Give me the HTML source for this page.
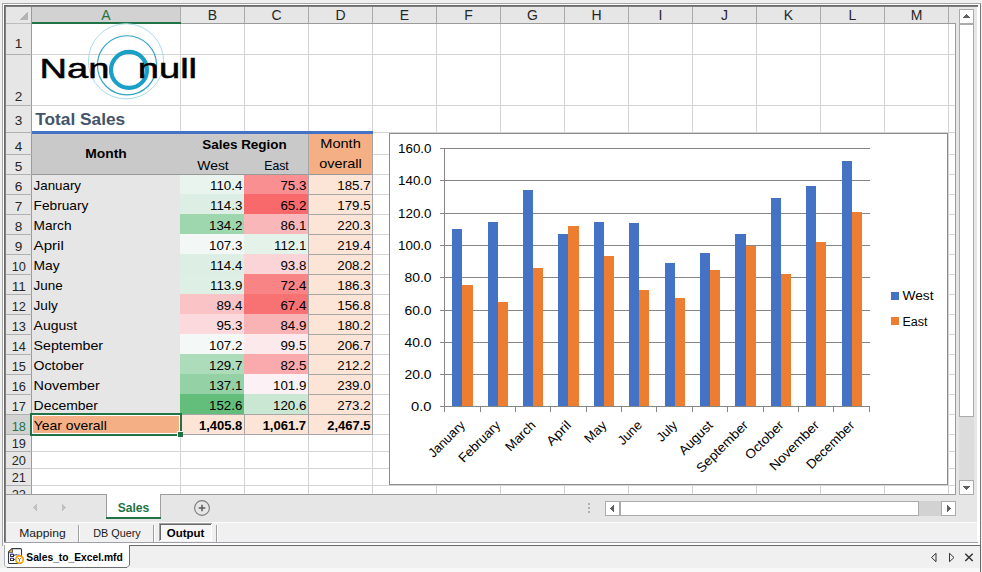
<!DOCTYPE html>
<html><head><meta charset="utf-8"><title>Sales_to_Excel.mfd - Output</title>
<style>
html,body{margin:0;padding:0;background:#f0f0f0;overflow:hidden}
svg{display:block;font-family:"Liberation Sans",sans-serif}
rect,polygon{shape-rendering:crispEdges}
text{white-space:pre}
</style></head><body>
<svg width="982" height="572" viewBox="0 0 982 572">
<rect x="0" y="0" width="982" height="572" fill="#f0f0f0" />
<rect x="6" y="7" width="972" height="535" fill="#e6e6e6" />
<rect x="6" y="522" width="972" height="20" fill="#f0f0f0" />
<rect x="6" y="522" width="971" height="1" fill="#fbfbfb" />
<rect x="2" y="3" width="979" height="1" fill="#a8a8a8" />
<rect x="3" y="4" width="977" height="1" fill="#ffffff" />
<rect x="4" y="5" width="974" height="1" fill="#696969" />
<rect x="4" y="6" width="974" height="1" fill="#808080" />
<rect x="2" y="3" width="1" height="543" fill="#a8a8a8" />
<rect x="3" y="4" width="1" height="539" fill="#ffffff" />
<rect x="4" y="5" width="1" height="538" fill="#696969" />
<rect x="5" y="6" width="1" height="537" fill="#808080" />
<rect x="977" y="7" width="3" height="538" fill="#ffffff" />
<rect x="978" y="5" width="2" height="2" fill="#ffffff" />
<rect x="980" y="4" width="1" height="541" fill="#787878" />
<rect x="4" y="542" width="974" height="1" fill="#a0a0a8" />
<rect x="4" y="543" width="976" height="2" fill="#ffffff" />
<rect x="129" y="545" width="852" height="1" fill="#696969" />
<rect x="0" y="546" width="980" height="22" fill="#f0f0f0" />
<rect x="0" y="568" width="980" height="4" fill="#f8f8f8" />
<rect x="980" y="545" width="1" height="27" fill="#696969" />
<rect x="32" y="24" width="923" height="470" fill="#ffffff" />
<rect x="6" y="7" width="950" height="16" fill="#e6e6e6" />
<rect x="6" y="24" width="25" height="470" fill="#e6e6e6" />
<rect x="32" y="7" width="148" height="15" fill="#d2d2d2" />
<rect x="6" y="415" width="25" height="19" fill="#d2d2d2" />
<rect x="180" y="24" width="1" height="470" fill="#d4d4d4" />
<rect x="244" y="24" width="1" height="470" fill="#d4d4d4" />
<rect x="308" y="24" width="1" height="470" fill="#d4d4d4" />
<rect x="372" y="24" width="1" height="470" fill="#d4d4d4" />
<rect x="436" y="24" width="1" height="470" fill="#d4d4d4" />
<rect x="500" y="24" width="1" height="470" fill="#d4d4d4" />
<rect x="564" y="24" width="1" height="470" fill="#d4d4d4" />
<rect x="628" y="24" width="1" height="470" fill="#d4d4d4" />
<rect x="692" y="24" width="1" height="470" fill="#d4d4d4" />
<rect x="756" y="24" width="1" height="470" fill="#d4d4d4" />
<rect x="820" y="24" width="1" height="470" fill="#d4d4d4" />
<rect x="884" y="24" width="1" height="470" fill="#d4d4d4" />
<rect x="948" y="24" width="1" height="470" fill="#d4d4d4" />
<rect x="32" y="54" width="923" height="1" fill="#d4d4d4" />
<rect x="32" y="105" width="923" height="1" fill="#d4d4d4" />
<rect x="32" y="132" width="923" height="1" fill="#d4d4d4" />
<rect x="32" y="154" width="923" height="1" fill="#d4d4d4" />
<rect x="32" y="174" width="923" height="1" fill="#d4d4d4" />
<rect x="32" y="194" width="923" height="1" fill="#d4d4d4" />
<rect x="32" y="214" width="923" height="1" fill="#d4d4d4" />
<rect x="32" y="234" width="923" height="1" fill="#d4d4d4" />
<rect x="32" y="254" width="923" height="1" fill="#d4d4d4" />
<rect x="32" y="274" width="923" height="1" fill="#d4d4d4" />
<rect x="32" y="294" width="923" height="1" fill="#d4d4d4" />
<rect x="32" y="314" width="923" height="1" fill="#d4d4d4" />
<rect x="32" y="334" width="923" height="1" fill="#d4d4d4" />
<rect x="32" y="354" width="923" height="1" fill="#d4d4d4" />
<rect x="32" y="374" width="923" height="1" fill="#d4d4d4" />
<rect x="32" y="394" width="923" height="1" fill="#d4d4d4" />
<rect x="32" y="414" width="923" height="1" fill="#d4d4d4" />
<rect x="32" y="434" width="923" height="1" fill="#d4d4d4" />
<rect x="32" y="451" width="923" height="1" fill="#d4d4d4" />
<rect x="32" y="468" width="923" height="1" fill="#d4d4d4" />
<rect x="32" y="485" width="923" height="1" fill="#d4d4d4" />
<rect x="31" y="7" width="1" height="487" fill="#9b9b9b" />
<rect x="180" y="7" width="1" height="17" fill="#ababab" />
<rect x="244" y="7" width="1" height="17" fill="#ababab" />
<rect x="308" y="7" width="1" height="17" fill="#ababab" />
<rect x="372" y="7" width="1" height="17" fill="#ababab" />
<rect x="436" y="7" width="1" height="17" fill="#ababab" />
<rect x="500" y="7" width="1" height="17" fill="#ababab" />
<rect x="564" y="7" width="1" height="17" fill="#ababab" />
<rect x="628" y="7" width="1" height="17" fill="#ababab" />
<rect x="692" y="7" width="1" height="17" fill="#ababab" />
<rect x="756" y="7" width="1" height="17" fill="#ababab" />
<rect x="820" y="7" width="1" height="17" fill="#ababab" />
<rect x="884" y="7" width="1" height="17" fill="#ababab" />
<rect x="948" y="7" width="1" height="17" fill="#ababab" />
<rect x="6" y="23" width="26" height="1" fill="#9b9b9b" />
<rect x="6" y="54" width="26" height="1" fill="#b0b0b0" />
<rect x="6" y="105" width="26" height="1" fill="#b0b0b0" />
<rect x="6" y="132" width="26" height="1" fill="#b0b0b0" />
<rect x="6" y="154" width="26" height="1" fill="#b0b0b0" />
<rect x="6" y="174" width="26" height="1" fill="#b0b0b0" />
<rect x="6" y="194" width="26" height="1" fill="#b0b0b0" />
<rect x="6" y="214" width="26" height="1" fill="#b0b0b0" />
<rect x="6" y="234" width="26" height="1" fill="#b0b0b0" />
<rect x="6" y="254" width="26" height="1" fill="#b0b0b0" />
<rect x="6" y="274" width="26" height="1" fill="#b0b0b0" />
<rect x="6" y="294" width="26" height="1" fill="#b0b0b0" />
<rect x="6" y="314" width="26" height="1" fill="#b0b0b0" />
<rect x="6" y="334" width="26" height="1" fill="#b0b0b0" />
<rect x="6" y="354" width="26" height="1" fill="#b0b0b0" />
<rect x="6" y="374" width="26" height="1" fill="#b0b0b0" />
<rect x="6" y="394" width="26" height="1" fill="#b0b0b0" />
<rect x="6" y="414" width="26" height="1" fill="#b0b0b0" />
<rect x="6" y="434" width="26" height="1" fill="#b0b0b0" />
<rect x="6" y="451" width="26" height="1" fill="#b0b0b0" />
<rect x="6" y="468" width="26" height="1" fill="#b0b0b0" />
<rect x="6" y="485" width="26" height="1" fill="#b0b0b0" />
<rect x="6" y="23" width="950" height="1" fill="#9b9b9b" />
<rect x="6" y="23" width="25" height="1" fill="#bcbcbc" />
<rect x="955" y="23" width="1" height="472" fill="#9b9b9b" />
<rect x="6" y="494" width="950" height="1" fill="#9b9b9b" />
<rect x="32" y="22" width="149" height="2" fill="#217346" />
<polygon points="28,11 28,20 19,20" fill="#b4b4b4"/>
<text x="106.0" y="20" font-size="14" text-anchor="middle" fill="#217346" >A</text>
<text x="212.5" y="20" font-size="14" text-anchor="middle" fill="#262626" >B</text>
<text x="276.5" y="20" font-size="14" text-anchor="middle" fill="#262626" >C</text>
<text x="340.5" y="20" font-size="14" text-anchor="middle" fill="#262626" >D</text>
<text x="404.5" y="20" font-size="14" text-anchor="middle" fill="#262626" >E</text>
<text x="468.5" y="20" font-size="14" text-anchor="middle" fill="#262626" >F</text>
<text x="532.5" y="20" font-size="14" text-anchor="middle" fill="#262626" >G</text>
<text x="596.5" y="20" font-size="14" text-anchor="middle" fill="#262626" >H</text>
<text x="660.5" y="20" font-size="14" text-anchor="middle" fill="#262626" >I</text>
<text x="724.5" y="20" font-size="14" text-anchor="middle" fill="#262626" >J</text>
<text x="788.5" y="20" font-size="14" text-anchor="middle" fill="#262626" >K</text>
<text x="852.5" y="20" font-size="14" text-anchor="middle" fill="#262626" >L</text>
<text x="916.5" y="20" font-size="14" text-anchor="middle" fill="#262626" >M</text>
<clipPath id="rh"><rect x="6" y="24" width="25" height="470"/></clipPath><g clip-path="url(#rh)">
<text x="18.5" y="48" font-size="13.6" text-anchor="middle" fill="#262626" >1</text>
<text x="18.5" y="101" font-size="13.6" text-anchor="middle" fill="#262626" >2</text>
<text x="18.5" y="125.3" font-size="13.6" text-anchor="middle" fill="#262626" >3</text>
<text x="18.5" y="150.5" font-size="13.6" text-anchor="middle" fill="#262626" >4</text>
<text x="18.5" y="170.5" font-size="13.6" text-anchor="middle" fill="#262626" >5</text>
<text x="18.5" y="190.5" font-size="13.6" text-anchor="middle" fill="#262626" >6</text>
<text x="18.5" y="210.5" font-size="13.6" text-anchor="middle" fill="#262626" >7</text>
<text x="18.5" y="230.5" font-size="13.6" text-anchor="middle" fill="#262626" >8</text>
<text x="18.5" y="250.5" font-size="13.6" text-anchor="middle" fill="#262626" >9</text>
<text x="18.8" y="270.5" font-size="13.6" text-anchor="middle" fill="#262626" textLength="14.2" lengthAdjust="spacingAndGlyphs">10</text>
<text x="18.8" y="290.5" font-size="13.6" text-anchor="middle" fill="#262626" textLength="14.2" lengthAdjust="spacingAndGlyphs">11</text>
<text x="18.8" y="310.5" font-size="13.6" text-anchor="middle" fill="#262626" textLength="14.2" lengthAdjust="spacingAndGlyphs">12</text>
<text x="18.8" y="330.5" font-size="13.6" text-anchor="middle" fill="#262626" textLength="14.2" lengthAdjust="spacingAndGlyphs">13</text>
<text x="18.8" y="350.5" font-size="13.6" text-anchor="middle" fill="#262626" textLength="14.2" lengthAdjust="spacingAndGlyphs">14</text>
<text x="18.8" y="370.5" font-size="13.6" text-anchor="middle" fill="#262626" textLength="14.2" lengthAdjust="spacingAndGlyphs">15</text>
<text x="18.8" y="390.5" font-size="13.6" text-anchor="middle" fill="#262626" textLength="14.2" lengthAdjust="spacingAndGlyphs">16</text>
<text x="18.8" y="410.5" font-size="13.6" text-anchor="middle" fill="#262626" textLength="14.2" lengthAdjust="spacingAndGlyphs">17</text>
<text x="18.8" y="430.5" font-size="13.6" text-anchor="middle" fill="#217346" textLength="14.2" lengthAdjust="spacingAndGlyphs">18</text>
<text x="18.8" y="447.5" font-size="13.6" text-anchor="middle" fill="#262626" textLength="14.2" lengthAdjust="spacingAndGlyphs">19</text>
<text x="18.8" y="464.5" font-size="13.6" text-anchor="middle" fill="#262626" textLength="14.2" lengthAdjust="spacingAndGlyphs">20</text>
<text x="18.8" y="481.5" font-size="13.6" text-anchor="middle" fill="#262626" textLength="14.2" lengthAdjust="spacingAndGlyphs">21</text>
<text x="18.8" y="498.5" font-size="13.6" text-anchor="middle" fill="#262626" textLength="14.2" lengthAdjust="spacingAndGlyphs">22</text>
</g>
<rect x="32" y="134" width="276" height="40" fill="#c9c9c9" />
<rect x="309" y="134" width="63" height="40" fill="#f4b084" />
<rect x="32" y="131" width="341" height="3" fill="#4472c4" />
<rect x="32" y="175" width="148" height="239" fill="#e7e6e6" />
<rect x="309" y="175" width="63" height="259" fill="#fce4d6" />
<rect x="180" y="174" width="64" height="20" fill="#e9f4ef" />
<rect x="244" y="174" width="64" height="20" fill="#f98f91" />
<rect x="180" y="194" width="64" height="20" fill="#ddefe4" />
<rect x="244" y="194" width="64" height="20" fill="#f8696b" />
<rect x="180" y="214" width="64" height="20" fill="#9ed6ae" />
<rect x="244" y="214" width="64" height="20" fill="#fab7ba" />
<rect x="180" y="234" width="64" height="20" fill="#f3f8f7" />
<rect x="244" y="234" width="64" height="20" fill="#e4f2ea" />
<rect x="180" y="254" width="64" height="20" fill="#ddefe4" />
<rect x="244" y="254" width="64" height="20" fill="#fbd4d7" />
<rect x="180" y="274" width="64" height="20" fill="#def0e5" />
<rect x="244" y="274" width="64" height="20" fill="#f98486" />
<rect x="180" y="294" width="64" height="20" fill="#fac3c6" />
<rect x="244" y="294" width="64" height="20" fill="#f87173" />
<rect x="180" y="314" width="64" height="20" fill="#fbd9dc" />
<rect x="244" y="314" width="64" height="20" fill="#fab3b5" />
<rect x="180" y="334" width="64" height="20" fill="#f4f9f8" />
<rect x="244" y="334" width="64" height="20" fill="#fbe9ec" />
<rect x="180" y="354" width="64" height="20" fill="#acdcba" />
<rect x="244" y="354" width="64" height="20" fill="#faaaac" />
<rect x="180" y="374" width="64" height="20" fill="#94d2a6" />
<rect x="244" y="374" width="64" height="20" fill="#fcf2f5" />
<rect x="180" y="394" width="64" height="20" fill="#63be7b" />
<rect x="244" y="394" width="64" height="20" fill="#c9e7d3" />
<rect x="32" y="415" width="148" height="19" fill="#f4b084" />
<rect x="180" y="415" width="128" height="19" fill="#fce4d6" />
<rect x="32" y="174" width="341" height="1" fill="#999999" />
<rect x="308" y="194" width="65" height="1" fill="#a6a6a6" />
<rect x="308" y="214" width="65" height="1" fill="#a6a6a6" />
<rect x="308" y="234" width="65" height="1" fill="#a6a6a6" />
<rect x="308" y="254" width="65" height="1" fill="#a6a6a6" />
<rect x="308" y="274" width="65" height="1" fill="#a6a6a6" />
<rect x="308" y="294" width="65" height="1" fill="#a6a6a6" />
<rect x="308" y="314" width="65" height="1" fill="#a6a6a6" />
<rect x="308" y="334" width="65" height="1" fill="#a6a6a6" />
<rect x="308" y="354" width="65" height="1" fill="#a6a6a6" />
<rect x="308" y="374" width="65" height="1" fill="#a6a6a6" />
<rect x="308" y="394" width="65" height="1" fill="#a6a6a6" />
<rect x="308" y="414" width="65" height="1" fill="#a6a6a6" />
<rect x="308" y="434" width="65" height="1" fill="#a6a6a6" />
<rect x="308" y="134" width="1" height="301" fill="#a6a6a6" />
<rect x="372" y="134" width="1" height="301" fill="#a6a6a6" />
<rect x="180" y="414" width="193" height="1" fill="#a6a6a6" />
<rect x="180" y="434" width="193" height="1" fill="#a6a6a6" />
<rect x="244" y="414" width="1" height="21" fill="#a6a6a6" />
<rect x="180" y="414" width="1" height="21" fill="#a6a6a6" />
<text x="33.6" y="189.6" font-size="13" fill="#000" textLength="47.4" lengthAdjust="spacingAndGlyphs">January</text>
<text x="242.3" y="189.6" font-size="13.3" text-anchor="end" fill="#000" >110.4</text>
<text x="306.3" y="189.6" font-size="13.3" text-anchor="end" fill="#000" >75.3</text>
<text x="370.6" y="189.6" font-size="13.3" text-anchor="end" fill="#000" >185.7</text>
<text x="33.6" y="209.6" font-size="13" fill="#000" textLength="54.7" lengthAdjust="spacingAndGlyphs">February</text>
<text x="242.3" y="209.6" font-size="13.3" text-anchor="end" fill="#000" >114.3</text>
<text x="306.3" y="209.6" font-size="13.3" text-anchor="end" fill="#000" >65.2</text>
<text x="370.6" y="209.6" font-size="13.3" text-anchor="end" fill="#000" >179.5</text>
<text x="33.6" y="229.6" font-size="13" fill="#000" textLength="37.9" lengthAdjust="spacingAndGlyphs">March</text>
<text x="242.3" y="229.6" font-size="13.3" text-anchor="end" fill="#000" >134.2</text>
<text x="306.3" y="229.6" font-size="13.3" text-anchor="end" fill="#000" >86.1</text>
<text x="370.6" y="229.6" font-size="13.3" text-anchor="end" fill="#000" >220.3</text>
<text x="33.6" y="249.6" font-size="13" fill="#000" textLength="30.2" lengthAdjust="spacingAndGlyphs">April</text>
<text x="242.3" y="249.6" font-size="13.3" text-anchor="end" fill="#000" >107.3</text>
<text x="306.3" y="249.6" font-size="13.3" text-anchor="end" fill="#000" >112.1</text>
<text x="370.6" y="249.6" font-size="13.3" text-anchor="end" fill="#000" >219.4</text>
<text x="33.6" y="269.6" font-size="13" fill="#000" textLength="26.1" lengthAdjust="spacingAndGlyphs">May</text>
<text x="242.3" y="269.6" font-size="13.3" text-anchor="end" fill="#000" >114.4</text>
<text x="306.3" y="269.6" font-size="13.3" text-anchor="end" fill="#000" >93.8</text>
<text x="370.6" y="269.6" font-size="13.3" text-anchor="end" fill="#000" >208.2</text>
<text x="33.6" y="289.6" font-size="13" fill="#000" textLength="29.1" lengthAdjust="spacingAndGlyphs">June</text>
<text x="242.3" y="289.6" font-size="13.3" text-anchor="end" fill="#000" >113.9</text>
<text x="306.3" y="289.6" font-size="13.3" text-anchor="end" fill="#000" >72.4</text>
<text x="370.6" y="289.6" font-size="13.3" text-anchor="end" fill="#000" >186.3</text>
<text x="33.6" y="309.6" font-size="13" fill="#000" textLength="24.1" lengthAdjust="spacingAndGlyphs">July</text>
<text x="242.3" y="309.6" font-size="13.3" text-anchor="end" fill="#000" >89.4</text>
<text x="306.3" y="309.6" font-size="13.3" text-anchor="end" fill="#000" >67.4</text>
<text x="370.6" y="309.6" font-size="13.3" text-anchor="end" fill="#000" >156.8</text>
<text x="33.6" y="329.6" font-size="13" fill="#000" textLength="43.5" lengthAdjust="spacingAndGlyphs">August</text>
<text x="242.3" y="329.6" font-size="13.3" text-anchor="end" fill="#000" >95.3</text>
<text x="306.3" y="329.6" font-size="13.3" text-anchor="end" fill="#000" >84.9</text>
<text x="370.6" y="329.6" font-size="13.3" text-anchor="end" fill="#000" >180.2</text>
<text x="33.6" y="349.6" font-size="13" fill="#000" textLength="69.5" lengthAdjust="spacingAndGlyphs">September</text>
<text x="242.3" y="349.6" font-size="13.3" text-anchor="end" fill="#000" >107.2</text>
<text x="306.3" y="349.6" font-size="13.3" text-anchor="end" fill="#000" >99.5</text>
<text x="370.6" y="349.6" font-size="13.3" text-anchor="end" fill="#000" >206.7</text>
<text x="33.6" y="369.6" font-size="13" fill="#000" textLength="50.1" lengthAdjust="spacingAndGlyphs">October</text>
<text x="242.3" y="369.6" font-size="13.3" text-anchor="end" fill="#000" >129.7</text>
<text x="306.3" y="369.6" font-size="13.3" text-anchor="end" fill="#000" >82.5</text>
<text x="370.6" y="369.6" font-size="13.3" text-anchor="end" fill="#000" >212.2</text>
<text x="33.6" y="389.6" font-size="13" fill="#000" textLength="66.3" lengthAdjust="spacingAndGlyphs">November</text>
<text x="242.3" y="389.6" font-size="13.3" text-anchor="end" fill="#000" >137.1</text>
<text x="306.3" y="389.6" font-size="13.3" text-anchor="end" fill="#000" >101.9</text>
<text x="370.6" y="389.6" font-size="13.3" text-anchor="end" fill="#000" >239.0</text>
<text x="33.6" y="409.6" font-size="13" fill="#000" textLength="64.3" lengthAdjust="spacingAndGlyphs">December</text>
<text x="242.3" y="409.6" font-size="13.3" text-anchor="end" fill="#000" >152.6</text>
<text x="306.3" y="409.6" font-size="13.3" text-anchor="end" fill="#000" >120.6</text>
<text x="370.6" y="409.6" font-size="13.3" text-anchor="end" fill="#000" >273.2</text>
<text x="242.3" y="429.6" font-size="13" text-anchor="end" font-weight="bold" fill="#000" >1,405.8</text>
<text x="306" y="429.6" font-size="13" text-anchor="end" font-weight="bold" fill="#000" >1,061.7</text>
<text x="370.6" y="429.6" font-size="13" text-anchor="end" font-weight="bold" fill="#000" >2,467.5</text>
<text x="106" y="157.7" font-size="13" text-anchor="middle" font-weight="bold" fill="#000" textLength="41.5" lengthAdjust="spacingAndGlyphs">Month</text>
<text x="244.5" y="148.5" font-size="13.4" text-anchor="middle" font-weight="bold" fill="#000" textLength="84.5" lengthAdjust="spacingAndGlyphs">Sales Region</text>
<text x="213" y="169.9" font-size="13" text-anchor="middle" fill="#000" textLength="31.5" lengthAdjust="spacingAndGlyphs">West</text>
<text x="276.5" y="169.9" font-size="13" text-anchor="middle" fill="#000" textLength="24.5" lengthAdjust="spacingAndGlyphs">East</text>
<text x="340.5" y="147.5" font-size="13" text-anchor="middle" fill="#000" textLength="40.5" lengthAdjust="spacingAndGlyphs">Month</text>
<text x="340.5" y="167.8" font-size="13" text-anchor="middle" fill="#000" textLength="42.5" lengthAdjust="spacingAndGlyphs">overall</text>
<text x="35.2" y="125.3" font-size="17.4" font-weight="bold" fill="#44546a" textLength="90" lengthAdjust="spacingAndGlyphs">Total Sales</text>
<rect x="30" y="413" width="152" height="23" fill="#217346" />
<rect x="32" y="415" width="148" height="19" fill="#ffffff" />
<rect x="33" y="416" width="146" height="17" fill="#f4b084" />
<rect x="177" y="431" width="6" height="6" fill="#ffffff" />
<rect x="178" y="432" width="5" height="5" fill="#217346" />
<text x="33.8" y="429.6" font-size="13" fill="#000" textLength="73" lengthAdjust="spacingAndGlyphs">Year overall</text>
<g shape-rendering="geometricPrecision">
<circle cx="126" cy="61.3" r="37.6" fill="none" stroke="#a8dcea" stroke-width="1"/>
<circle cx="127" cy="65.3" r="29.6" fill="none" stroke="#2fa3c6" stroke-width="1.15"/>
<circle cx="129" cy="69.9" r="18" fill="none" stroke="#1a9fc6" stroke-width="4.2"/>
<text transform="translate(39.6,78.3) scale(1.36,1)" font-size="28" fill="#000" stroke="#000" stroke-width="0.5">Nan</text>
<text transform="translate(137.8,78.3) scale(1.36,1)" font-size="28" fill="#000" stroke="#000" stroke-width="0.5">null</text>
</g>
<rect x="389" y="133" width="559" height="352" fill="#ffffff" />
<rect x="389.5" y="133.5" width="558" height="351" fill="none" stroke="#8c8c8c" stroke-width="1"/>
<rect x="440" y="406" width="430" height="1" fill="#868686" />
<text x="431.5" y="411.4" font-size="12" text-anchor="end" fill="#000" textLength="20.5" lengthAdjust="spacingAndGlyphs">0.0</text>
<rect x="440" y="374" width="430" height="1" fill="#868686" />
<text x="431.5" y="379.4" font-size="12" text-anchor="end" fill="#000" textLength="27" lengthAdjust="spacingAndGlyphs">20.0</text>
<rect x="440" y="342" width="430" height="1" fill="#868686" />
<text x="431.5" y="347.4" font-size="12" text-anchor="end" fill="#000" textLength="27" lengthAdjust="spacingAndGlyphs">40.0</text>
<rect x="440" y="310" width="430" height="1" fill="#868686" />
<text x="431.5" y="315.4" font-size="12" text-anchor="end" fill="#000" textLength="27" lengthAdjust="spacingAndGlyphs">60.0</text>
<rect x="440" y="277" width="430" height="1" fill="#868686" />
<text x="431.5" y="282.4" font-size="12" text-anchor="end" fill="#000" textLength="27" lengthAdjust="spacingAndGlyphs">80.0</text>
<rect x="440" y="245" width="430" height="1" fill="#868686" />
<text x="431.5" y="250.4" font-size="12" text-anchor="end" fill="#000" textLength="33.5" lengthAdjust="spacingAndGlyphs">100.0</text>
<rect x="440" y="213" width="430" height="1" fill="#868686" />
<text x="431.5" y="218.4" font-size="12" text-anchor="end" fill="#000" textLength="33.5" lengthAdjust="spacingAndGlyphs">120.0</text>
<rect x="440" y="180" width="430" height="1" fill="#868686" />
<text x="431.5" y="185.4" font-size="12" text-anchor="end" fill="#000" textLength="33.5" lengthAdjust="spacingAndGlyphs">140.0</text>
<rect x="440" y="148" width="430" height="1" fill="#868686" />
<text x="431.5" y="153.4" font-size="12" text-anchor="end" fill="#000" textLength="33.5" lengthAdjust="spacingAndGlyphs">160.0</text>
<rect x="444" y="148" width="1" height="259" fill="#868686" />
<rect x="444" y="406" width="1" height="6" fill="#868686" />
<rect x="480" y="406" width="1" height="6" fill="#868686" />
<rect x="515" y="406" width="1" height="6" fill="#868686" />
<rect x="550" y="406" width="1" height="6" fill="#868686" />
<rect x="586" y="406" width="1" height="6" fill="#868686" />
<rect x="621" y="406" width="1" height="6" fill="#868686" />
<rect x="656" y="406" width="1" height="6" fill="#868686" />
<rect x="692" y="406" width="1" height="6" fill="#868686" />
<rect x="727" y="406" width="1" height="6" fill="#868686" />
<rect x="763" y="406" width="1" height="6" fill="#868686" />
<rect x="798" y="406" width="1" height="6" fill="#868686" />
<rect x="833" y="406" width="1" height="6" fill="#868686" />
<rect x="869" y="406" width="1" height="6" fill="#868686" />
<rect x="452" y="229" width="10" height="177" fill="#4472c4" />
<rect x="462" y="285" width="11" height="121" fill="#ed7d31" />
<rect x="488" y="222" width="10" height="184" fill="#4472c4" />
<rect x="498" y="302" width="10" height="104" fill="#ed7d31" />
<rect x="523" y="190" width="10" height="216" fill="#4472c4" />
<rect x="533" y="268" width="10" height="138" fill="#ed7d31" />
<rect x="558" y="234" width="10" height="172" fill="#4472c4" />
<rect x="568" y="226" width="11" height="180" fill="#ed7d31" />
<rect x="594" y="222" width="10" height="184" fill="#4472c4" />
<rect x="604" y="256" width="10" height="150" fill="#ed7d31" />
<rect x="629" y="223" width="10" height="183" fill="#4472c4" />
<rect x="639" y="290" width="10" height="116" fill="#ed7d31" />
<rect x="665" y="263" width="10" height="143" fill="#4472c4" />
<rect x="675" y="298" width="10" height="108" fill="#ed7d31" />
<rect x="700" y="253" width="10" height="153" fill="#4472c4" />
<rect x="710" y="270" width="10" height="136" fill="#ed7d31" />
<rect x="735" y="234" width="11" height="172" fill="#4472c4" />
<rect x="746" y="246" width="10" height="160" fill="#ed7d31" />
<rect x="771" y="198" width="10" height="208" fill="#4472c4" />
<rect x="781" y="274" width="10" height="132" fill="#ed7d31" />
<rect x="806" y="186" width="10" height="220" fill="#4472c4" />
<rect x="816" y="242" width="10" height="164" fill="#ed7d31" />
<rect x="842" y="161" width="10" height="245" fill="#4472c4" />
<rect x="852" y="212" width="10" height="194" fill="#ed7d31" />
<rect x="440" y="406" width="430" height="1" fill="#868686" />
<text transform="translate(465.7,426) rotate(-45)" font-size="13" text-anchor="end" fill="#000" textLength="45.7" lengthAdjust="spacingAndGlyphs">January</text>
<text transform="translate(501.1,426) rotate(-45)" font-size="13" text-anchor="end" fill="#000" textLength="52.8" lengthAdjust="spacingAndGlyphs">February</text>
<text transform="translate(536.5,426) rotate(-45)" font-size="13" text-anchor="end" fill="#000" textLength="36.6" lengthAdjust="spacingAndGlyphs">March</text>
<text transform="translate(572.0,426) rotate(-45)" font-size="13" text-anchor="end" fill="#000" textLength="29.1" lengthAdjust="spacingAndGlyphs">April</text>
<text transform="translate(607.4,426) rotate(-45)" font-size="13" text-anchor="end" fill="#000" textLength="25.2" lengthAdjust="spacingAndGlyphs">May</text>
<text transform="translate(642.8,426) rotate(-45)" font-size="13" text-anchor="end" fill="#000" textLength="28.1" lengthAdjust="spacingAndGlyphs">June</text>
<text transform="translate(678.2,426) rotate(-45)" font-size="13" text-anchor="end" fill="#000" textLength="23.3" lengthAdjust="spacingAndGlyphs">July</text>
<text transform="translate(713.6,426) rotate(-45)" font-size="13" text-anchor="end" fill="#000" textLength="42.0" lengthAdjust="spacingAndGlyphs">August</text>
<text transform="translate(749.0,426) rotate(-45)" font-size="13" text-anchor="end" fill="#000" textLength="67.1" lengthAdjust="spacingAndGlyphs">September</text>
<text transform="translate(784.5,426) rotate(-45)" font-size="13" text-anchor="end" fill="#000" textLength="48.3" lengthAdjust="spacingAndGlyphs">October</text>
<text transform="translate(819.9,426) rotate(-45)" font-size="13" text-anchor="end" fill="#000" textLength="64.0" lengthAdjust="spacingAndGlyphs">November</text>
<text transform="translate(855.3,426) rotate(-45)" font-size="13" text-anchor="end" fill="#000" textLength="62.0" lengthAdjust="spacingAndGlyphs">December</text>
<rect x="891" y="292" width="8" height="8" fill="#4472c4" />
<rect x="891" y="317" width="8" height="8" fill="#ed7d31" />
<text x="902.5" y="299.6" font-size="12" fill="#000" textLength="31" lengthAdjust="spacingAndGlyphs">West</text>
<text x="902.5" y="325.7" font-size="12" fill="#000" textLength="25" lengthAdjust="spacingAndGlyphs">East</text>
<rect x="959" y="9" width="15" height="486" fill="#dcdcdc" />
<rect x="959" y="9" width="15" height="15" fill="#ababab" />
<rect x="960" y="10" width="13" height="13" fill="#ffffff" />
<rect x="959" y="24" width="15" height="393" fill="#ababab" />
<rect x="960" y="25" width="13" height="391" fill="#ffffff" />
<rect x="959" y="480" width="15" height="15" fill="#ababab" />
<rect x="960" y="481" width="13" height="13" fill="#ffffff" />
<polygon points="962.5,18 970.5,18 966.5,13.5" fill="#606060"/>
<polygon points="962.5,486 970.5,486 966.5,490.5" fill="#606060"/>
<rect x="107" y="494" width="53" height="23" fill="#ffffff" />
<rect x="106" y="494" width="1" height="23" fill="#a0a0a0" />
<rect x="160" y="494" width="1" height="23" fill="#a0a0a0" />
<rect x="106" y="517" width="55" height="2" fill="#217346" />
<text x="133.5" y="511.7" font-size="13" text-anchor="middle" font-weight="bold" fill="#217346" textLength="31.5" lengthAdjust="spacingAndGlyphs">Sales</text>
<polygon points="37,503.8 37,511.2 33,507.5" fill="#c0c0c0"/>
<polygon points="62,503.8 62,511.2 66,507.5" fill="#c0c0c0"/>
<circle cx="202" cy="508" r="7.4" fill="none" stroke="#7a7a7a" stroke-width="1.1" shape-rendering="geometricPrecision"/>
<path d="M198.7,508 H205.3 M202,504.7 V511.3" stroke="#5a5a5a" stroke-width="1.5" fill="none" shape-rendering="geometricPrecision"/>
<rect x="588" y="503" width="2" height="2" fill="#b0b0b0" />
<rect x="588" y="507" width="2" height="2" fill="#b0b0b0" />
<rect x="588" y="511" width="2" height="2" fill="#b0b0b0" />
<rect x="605" y="501" width="351" height="15" fill="#d2d2d2" />
<rect x="605" y="501" width="15" height="15" fill="#ababab" />
<rect x="606" y="502" width="13" height="13" fill="#ffffff" />
<rect x="620" y="501" width="299" height="15" fill="#ababab" />
<rect x="621" y="502" width="297" height="13" fill="#ffffff" />
<rect x="941" y="501" width="15" height="15" fill="#ababab" />
<rect x="942" y="502" width="13" height="13" fill="#ffffff" />
<polygon points="614,504.5 614,512.5 609.5,508.5" fill="#606060"/>
<polygon points="946.5,504.5 946.5,512.5 951,508.5" fill="#606060"/>
<text x="42.5" y="537" font-size="11" text-anchor="middle" fill="#1a1a1a" textLength="46.5" lengthAdjust="spacingAndGlyphs">Mapping</text>
<rect x="78" y="525" width="1" height="17" fill="#a0a0a0" />
<rect x="79" y="525" width="1" height="17" fill="#ffffff" />
<text x="117" y="537" font-size="11" text-anchor="middle" fill="#1a1a1a" textLength="47.5" lengthAdjust="spacingAndGlyphs">DB Query</text>
<rect x="153" y="525" width="1" height="17" fill="#a0a0a0" />
<rect x="154" y="525" width="1" height="17" fill="#ffffff" />
<rect x="159" y="523" width="53" height="18" fill="#f6f6f6" />
<rect x="159" y="523" width="53" height="1" fill="#a0a0a0" />
<rect x="159" y="523" width="1" height="18" fill="#a0a0a0" />
<rect x="160" y="524" width="51" height="1" fill="#696969" />
<rect x="160" y="524" width="1" height="16" fill="#696969" />
<rect x="160" y="540" width="52" height="1" fill="#ffffff" />
<rect x="211" y="524" width="1" height="17" fill="#ffffff" />
<text x="185.5" y="537" font-size="11" text-anchor="middle" font-weight="bold" fill="#000" textLength="37.5" lengthAdjust="spacingAndGlyphs">Output</text>
<rect x="216" y="525" width="1" height="17" fill="#a0a0a0" />
<rect x="217" y="525" width="1" height="17" fill="#ffffff" />
<path d="M4.5,545 V565 L7,567.5 H127 L129.5,565 V545 Z" fill="#ffffff" shape-rendering="geometricPrecision"/>
<path d="M4.5,545 V565 L7,567.5" fill="none" stroke="#b0b0b0" stroke-width="1" shape-rendering="geometricPrecision"/>
<path d="M7,567.5 H127 L129.5,565 V545" fill="none" stroke="#6e6e6e" stroke-width="1" shape-rendering="geometricPrecision"/>
<rect x="5" y="543" width="124" height="3" fill="#ffffff" />
<text x="26.3" y="561.2" font-size="11" font-weight="bold" fill="#000" textLength="96.5" lengthAdjust="spacingAndGlyphs">Sales_to_Excel.mfd</text>
<g shape-rendering="geometricPrecision">
<path d="M12,548.6 H20.4 Q21.5,548.6 21.5,549.7 V562.4 Q21.5,563.5 20.4,563.5 H9.6 Q8.5,563.5 8.5,562.4 V552.1 Z" fill="#ffffff" stroke="#2f3a44" stroke-width="1.1"/>
<path d="M8.7,552.6 L12.5,548.8 V552.6 Z" fill="#f5a623"/>
<path d="M8.5,552.6 H12.5 V548.6" fill="none" stroke="#2f3a44" stroke-width="0.7"/>
<rect x="10.6" y="554.2" width="2.8" height="2" fill="#fff" stroke="#1c1c28" stroke-width="0.9"/>
<rect x="10.6" y="558.4" width="2.8" height="2" fill="#fff" stroke="#1c1c28" stroke-width="0.9"/>
<path d="M10.4,553.9 H13.6 M10.4,558.1 H13.6 M17,554.8 H19.6" stroke="#6f6fff" stroke-width="0.9" fill="none"/>
<path d="M13.8,555.2 H15 L15.6,554.8 H17 M13.8,559.4 H15.5" stroke="#1c1c28" stroke-width="0.9" fill="none"/>
<circle cx="19.5" cy="559.5" r="3.7" fill="#ffffff" stroke="#f7a10c" stroke-width="1.7"/>
<path d="M18,557.7 L19.5,559.7 L21,557.7 M19.5,559.7 V561.6" stroke="#c0641a" stroke-width="1" fill="none"/>
</g>
<g shape-rendering="geometricPrecision" fill="none" stroke="#333" stroke-width="1">
<path d="M936,553.3 V561.7 L931.5,557.5 Z"/>
<path d="M949.5,553.3 V561.7 L954,557.5 Z"/>
<path d="M965.3,553.8 L972.7,561 M972.7,553.8 L965.3,561" stroke-width="1.5"/>
</g>
</svg>
</body></html>
